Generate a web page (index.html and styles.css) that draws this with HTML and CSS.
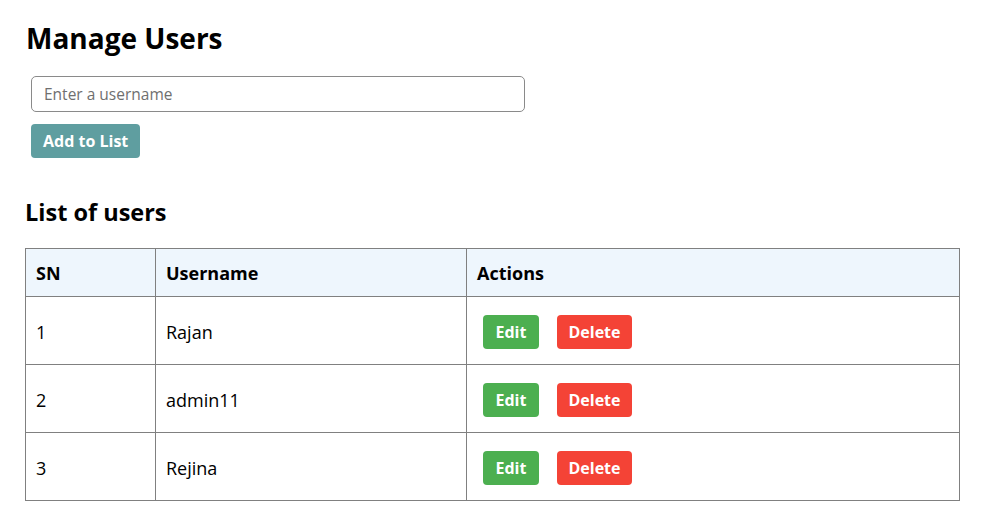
FILE: index.html
```html
<!DOCTYPE html>
<html>
<head>
<meta charset="utf-8">
<link rel="stylesheet" href="styles.css">
</head>
<body>
<div class="page">
  <h1 class="title">Manage Users</h1>
  <div class="form">
    <input class="name-input" type="text" placeholder="Enter a username">
    <div><button class="btn btn-add">Add to List</button></div>
  </div>
  <h2 class="subtitle">List of users</h2>
  <table class="users">
    <thead>
      <tr><th class="col-sn">SN</th><th class="col-name">Username</th><th>Actions</th></tr>
    </thead>
    <tbody>
      <tr><td>1</td><td>Rajan</td><td><div class="actions"><button class="btn btn-edit">Edit</button><button class="btn btn-delete">Delete</button></div></td></tr>
      <tr><td>2</td><td>admin11</td><td><div class="actions"><button class="btn btn-edit">Edit</button><button class="btn btn-delete">Delete</button></div></td></tr>
      <tr><td>3</td><td>Rejina</td><td><div class="actions"><button class="btn btn-edit">Edit</button><button class="btn btn-delete">Delete</button></div></td></tr>
    </tbody>
  </table>
</div>
</body>
</html>
```
FILE: styles.css
```css
html, body {
  margin: 0;
  padding: 0;
  background: #fff;
}
body {
  font-family: "Open Sans", "Noto Sans", sans-serif;
  color: #000;
}
.page {
  padding: 18px 22px 20px 25px;
}
.title {
  font-size: 28px;
  font-weight: 700;
  margin: 0 0 0 1px;
  line-height: 40px;
}
.form {
  margin: 18px 0 0 6px;
  display: flex;
  flex-direction: column;
  gap: 12px;
}
.name-input {
  width: 494px;
  height: 36px;
  box-sizing: border-box;
  border: 1px solid #8a8a8a;
  border-radius: 5px;
  padding: 0 12px;
  font-family: inherit;
  font-size: 15.5px;
  color: #333;
  outline: none;
}
.name-input::placeholder {
  color: #6f6f6f;
}
.btn {
  border: none;
  color: #fff;
  font-family: inherit;
  font-weight: 700;
  cursor: pointer;
  border-radius: 4px;
}
.btn-add {
  background: #5f9ea0;
  height: 34px;
  padding: 0 12px;
  font-size: 16px;
}
.subtitle {
  font-size: 23.5px;
  font-weight: 700;
  margin: 39px 0 0 0;
  line-height: 30px;
}
.users {
  margin-top: 21px;
  width: 935px;
  border-collapse: collapse;
  font-size: 18px;
}
.users th, .users td {
  border: 1px solid #808080;
  text-align: left;
  padding: 0 10px;
}
.users th {
  background: #eef6fd;
  height: 47px;
  font-weight: 700;
}
.users td {
  height: 65px;
  padding-top: 2px;
}
.col-sn { width: 109px; }
.col-name { width: 290px; }
.actions {
  display: flex;
  gap: 18px;
  padding-left: 6px;
}
.btn-edit, .btn-delete {
  height: 34px;
  font-size: 16px;
  padding: 0;
}
.btn-edit { background: #4caf50; width: 56px; }
.btn-delete { background: #f44336; width: 75px; }
```
